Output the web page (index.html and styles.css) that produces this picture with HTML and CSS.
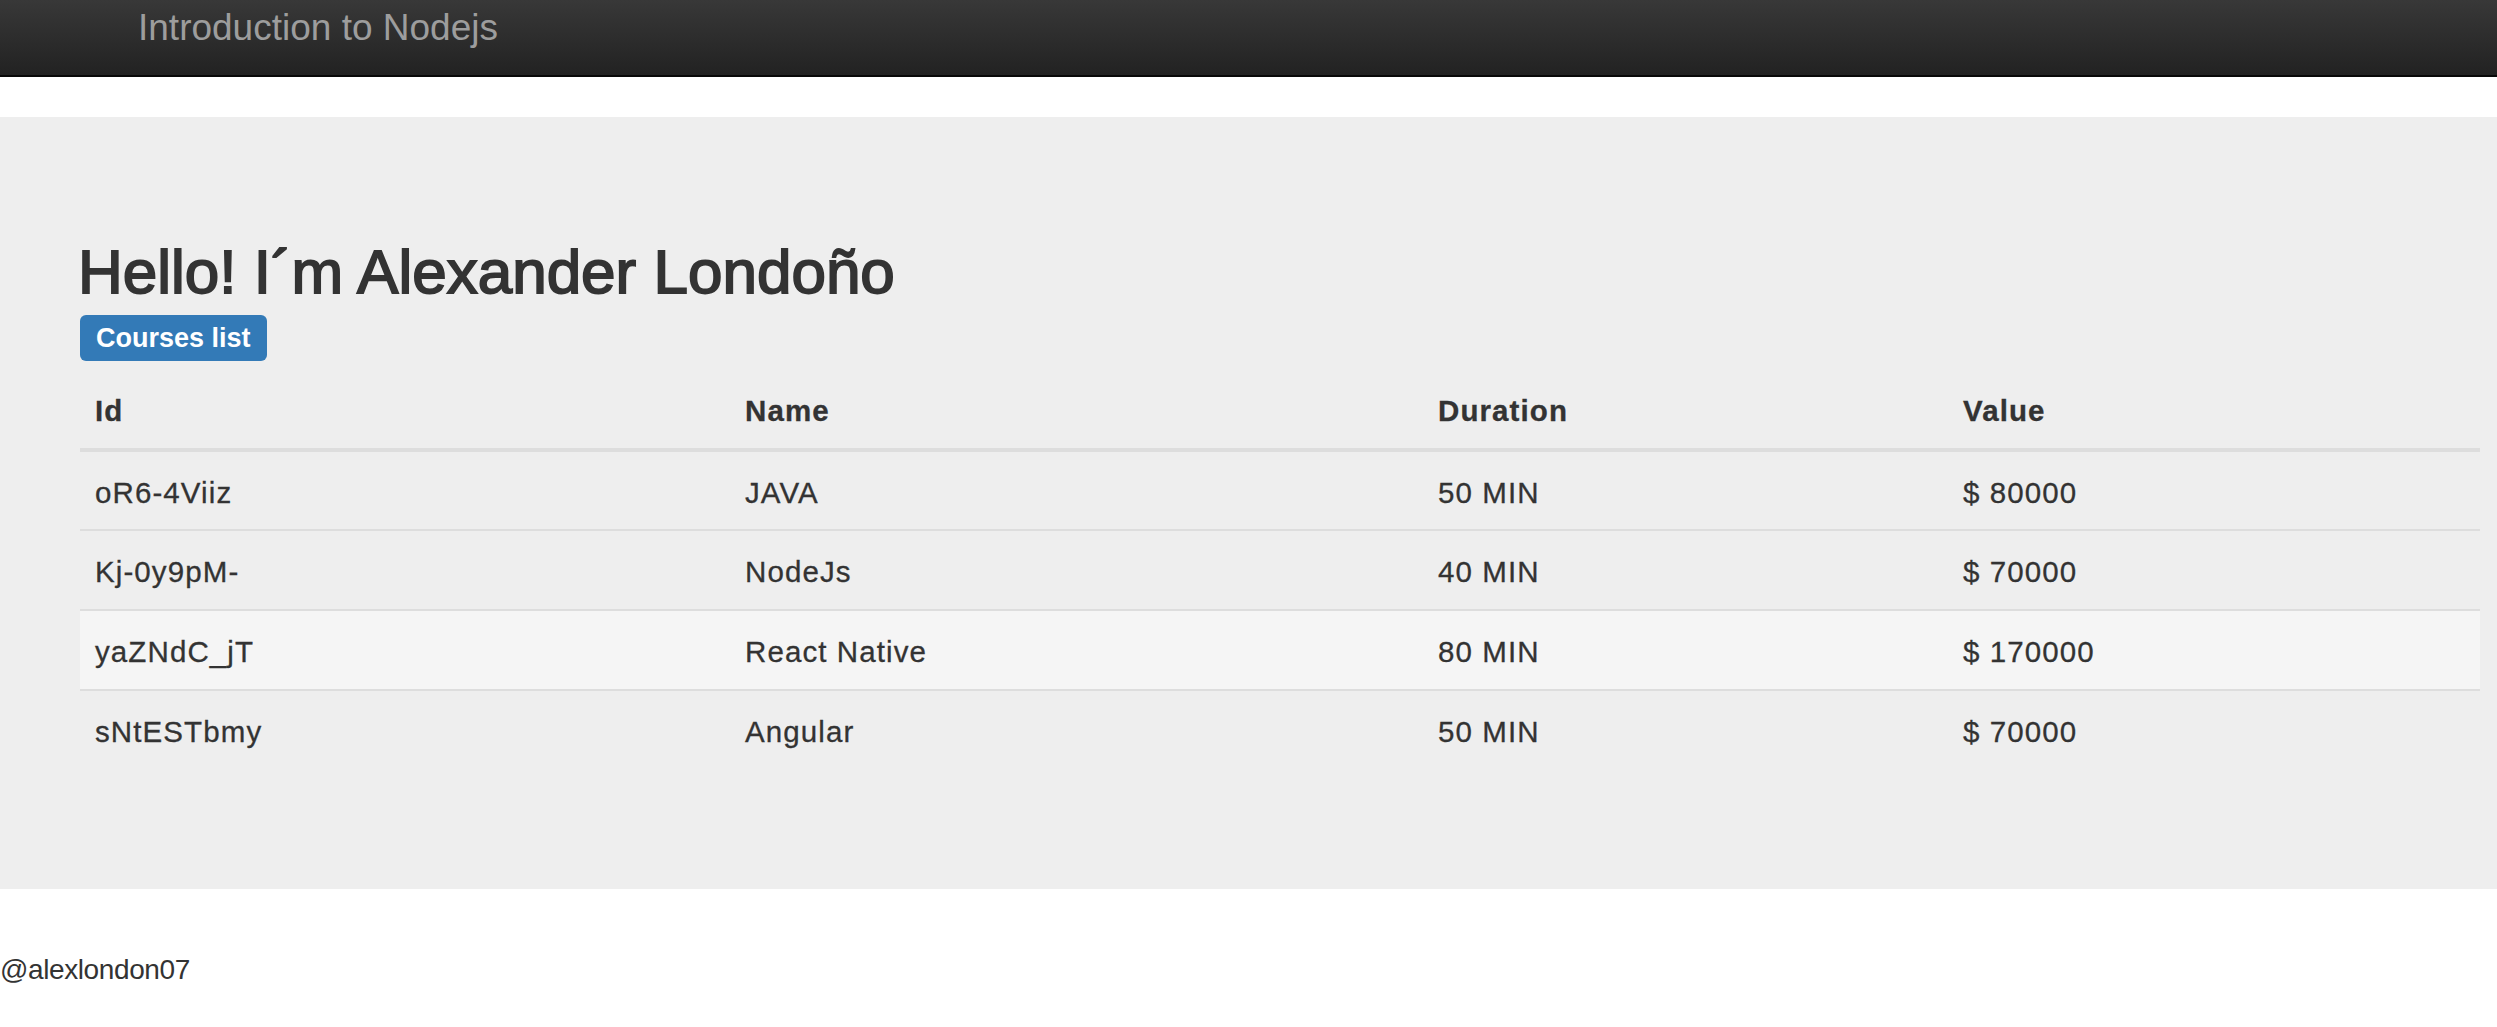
FILE: index.html
```html
<!DOCTYPE html>
<html lang="en">
<head>
<meta charset="utf-8">
<title>Introduction to Nodejs</title>
<link rel="stylesheet" href="styles.css">
</head>
<body>
<nav class="navbar">
  <span class="brand">Introduction to Nodejs</span>
</nav>
<main class="jumbotron">
  <h1 class="title">Hello! I´m Alexander Londoño</h1>
  <span class="label">Courses list</span>
  <table class="courses">
    <colgroup>
      <col class="col-id">
      <col class="col-name">
      <col class="col-duration">
      <col class="col-value">
    </colgroup>
    <thead>
      <tr><th>Id</th><th>Name</th><th>Duration</th><th>Value</th></tr>
    </thead>
    <tbody>
      <tr><td>oR6-4Viiz</td><td>JAVA</td><td>50 MIN</td><td>$ 80000</td></tr>
      <tr><td>Kj-0y9pM-</td><td>NodeJs</td><td>40 MIN</td><td>$ 70000</td></tr>
      <tr class="is-hover"><td>yaZNdC_jT</td><td>React Native</td><td>80 MIN</td><td>$ 170000</td></tr>
      <tr><td>sNtESTbmy</td><td>Angular</td><td>50 MIN</td><td>$ 70000</td></tr>
    </tbody>
  </table>
</main>
<footer class="footer">@alexlondon07</footer>
</body>
</html>
```
FILE: styles.css
```css
html, body {
  margin: 0;
  padding: 0;
}
body {
  background: #fff;
  color: #333;
  font-family: "Liberation Sans", Arial, Helvetica, sans-serif;
}
.navbar {
  height: 75px;
  border-bottom: 2px solid #080808;
  background: linear-gradient(to bottom, #383838 0%, #222 100%);
  margin-bottom: 40px;
}
.brand {
  display: block;
  padding: 7px 0 0 138px;
  font-size: 37px;
  line-height: 41px;
  color: #9d9d9d;
}
.jumbotron {
  display: block;
  background: #eee;
  padding: 121px 17px 120px 80px;
}
.title {
  margin: 0 0 9px -2px;
  font-size: 62px;
  line-height: 68px;
  font-weight: 500;
  color: #333;
  -webkit-text-stroke: 1.8px #333;
}
.label {
  display: block;
  width: max-content;
  height: 46px;
  padding: 0 16px;
  border-radius: 6px;
  background: #337ab7;
  color: #fff;
  font-size: 27px;
  font-weight: 700;
  line-height: 46px;
}
.courses {
  width: 100%;
  margin-top: 9px;
  table-layout: fixed;
  border-collapse: separate;
  border-spacing: 0;
  font-size: 29.5px;
  letter-spacing: 1.1px;
}
.col-id { width: 650px; }
.col-name { width: 693px; }
.col-duration { width: 525px; }
.col-value { width: 532px; }
.courses th,
.courses td {
  padding: 18px 15px 14px;
  line-height: 46px;
  text-align: left;
  color: #333;
  -webkit-text-stroke: 0.3px #333;
}
.courses th {
  font-weight: 700;
  border-bottom: 4px solid #ddd;
}
.courses td {
  border-top: 2px solid #ddd;
}
.courses tbody tr:first-child td {
  border-top: 0;
  padding-bottom: 13px;
}
.courses tr.is-hover td {
  background: #f5f5f5;
}
.footer {
  padding-top: 65px;
  font-size: 28px;
  line-height: 32px;
  letter-spacing: -0.4px;
  color: #333;
}
```
